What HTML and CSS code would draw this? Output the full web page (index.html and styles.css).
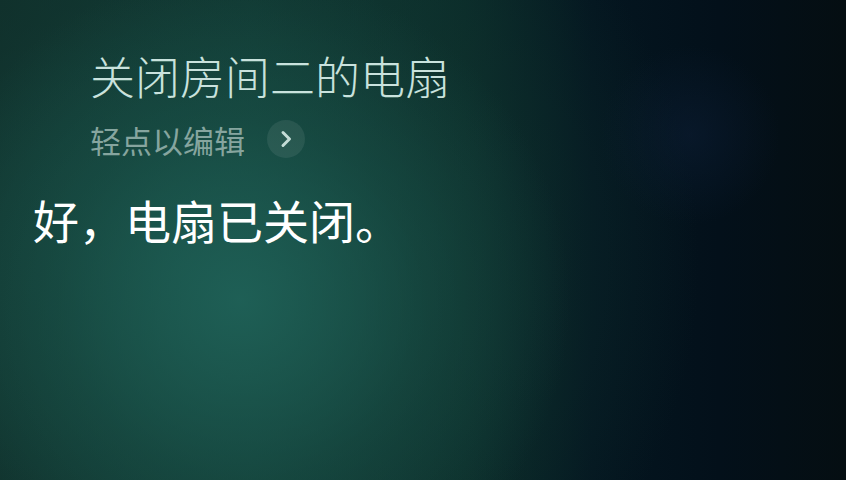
FILE: index.html
```html
<!DOCTYPE html>
<html lang="zh-CN">
<head>
<meta charset="utf-8">
<title>Siri</title>
<link rel="stylesheet" href="styles.css">
</head>
<body>
<main class="screen">
  <section class="query">
    <h1 class="query-text">关闭房间二的电扇</h1>
    <div class="edit-row">
      <span class="edit-label">轻点以编辑</span>
      <span class="edit-btn">
        <svg width="16" height="18" viewBox="0 0 16 18" aria-hidden="true">
          <path d="M5 2.5 L11.5 9 L5 15.5" fill="none" stroke="#c4dcd6" stroke-width="3" stroke-linecap="round" stroke-linejoin="round"/>
        </svg>
      </span>
    </div>
  </section>
  <p class="answer">好，电扇已关闭。</p>
</main>
</body>
</html>
```

FILE: styles.css
```css
html, body {
  margin: 0;
  padding: 0;
  background: #03111a;
}

.screen {
  width: 846px;
  height: 480px;
  overflow: hidden;
  box-sizing: border-box;
  padding-top: 53px;
  display: flex;
  flex-direction: column;
  font-family: "Noto Sans CJK SC", "Noto Sans", sans-serif;
  background:
    radial-gradient(ellipse 90px 90px at 690px 135px, rgba(14, 32, 58, 0.45), rgba(14, 32, 58, 0) 100%),
    radial-gradient(ellipse 330px 330px at 240px 300px, rgba(32, 100, 90, 0.85), rgba(28, 90, 80, 0.4) 55%, rgba(20, 60, 54, 0) 100%),
    radial-gradient(ellipse 520px 500px at 180px 260px, rgba(22, 72, 64, 0.9), rgba(18, 56, 50, 0.5) 55%, rgba(10, 30, 30, 0) 100%),
    linear-gradient(90deg, #0f2c28 0%, #103a34 30%, #0a2a28 55%, #041620 70%, #03101a 85%, #050e12 100%);
}

.query {
  padding-left: 90px;
  display: flex;
  flex-direction: column;
}

.query-text {
  margin: 0;
  font-size: 45px;
  line-height: 45px;
  font-weight: 300;
  color: #c9e2dd;
  letter-spacing: 0;
}

.edit-row {
  margin-top: 22px;
  display: flex;
  align-items: center;
  gap: 22px;
  height: 38px;
}

.edit-label {
  font-size: 31px;
  line-height: 31px;
  font-weight: 400;
  color: #86a59f;
}

.edit-btn {
  width: 38px;
  height: 38px;
  border-radius: 50%;
  background: rgba(255, 255, 255, 0.08);
  display: flex;
  align-items: center;
  justify-content: center;
}

.answer {
  margin: 38px 0 0 33px;
  font-size: 46px;
  line-height: 46px;
  font-weight: 400;
  color: #ffffff;
}
```
